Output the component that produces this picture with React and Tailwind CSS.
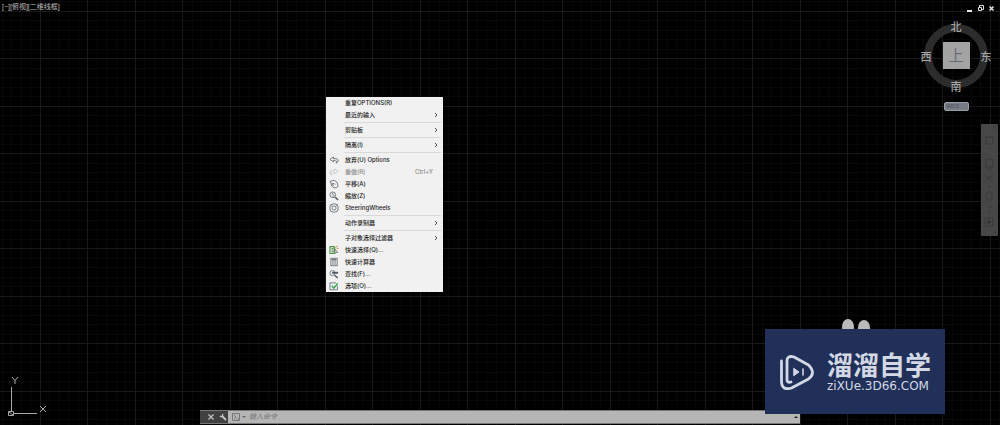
import { useState } from 'react';

const MINOR = [9, 19, 28, 38, 57, 66, 76, 85];
const MAJOR = [0, 47];

const MENU = [
  [
    { label: '重复OPTIONS(R)' },
    { label: '最近的输入', sub: true },
  ],
  [{ label: '剪贴板', sub: true }],
  [{ label: '隔离(I)', sub: true }],
  [
    { label: '放弃(U) Options', icon: 'undo' },
    { label: '重做(R)', icon: 'redo', hint: 'Ctrl+Y', disabled: true },
    { label: '平移(A)', icon: 'pan' },
    { label: '缩放(Z)', icon: 'zoom' },
    { label: 'SteeringWheels', icon: 'wheel' },
  ],
  [{ label: '动作录制器', sub: true }],
  [
    { label: '子对象选择过滤器', sub: true },
    { label: '快速选择(Q)...', icon: 'select' },
    { label: '快速计算器', icon: 'calc' },
    { label: '查找(F)...', icon: 'find' },
    { label: '选项(O)...', icon: 'options' },
  ],
];

const ICONS = {
  undo: <path d="M7 3 1.500 7 7 11V8.500h3.500q2 0 1 4.500 4-2 3-5-1-2.500-4-2.500H7z" />,
  redo: <path d="M9 3l5.500 4L9 11V8.500H5.500q-2 0-1 4.500-4-2-3-5 1-2.500 4-2.500H9z" />,
  pan: <path d="M1.500 4.500 5 2.500h4l3 2 2 3.500v4l-2.500 2H8L5 11.500 3 9.500l1.500-1L8 10.500M1.500 4.500 4 8l4-1 2 2" />,
  zoom: (
    <>
      <circle cx="6" cy="6" r="4.500" />
      <path d="M6 3v3l2.500 1M6 8.500l3 3" />
      <path d="m10 10 4.500 4.500" strokeWidth="2.400" />
    </>
  ),
  wheel: (
    <>
      <rect x="1.500" y="1.500" width="13" height="13" rx="5" />
      <rect x="5" y="5" width="6" height="6" rx="2" />
      <path d="m3 3 2.500 2.500M13 3l-2.500 2.500" strokeWidth=".8" />
    </>
  ),
  select: (
    <>
      <path d="M1.500 2.500h7v11h-7zM4 5.500h3M4 8h3M4 10.500h3" stroke="#4d9648" strokeWidth="1.800" />
      <path d="M9.500 6v8l2-2h2.500z" stroke="#666" />
      <path d="m10 4 4-2.500M12.500 5.500h2.500" stroke="#c38b3c" strokeWidth="1.600" />
    </>
  ),
  calc: (
    <>
      <rect x="3" y="2" width="10" height="12" />
      <path d="M4.500 4.500h7" strokeWidth="2" />
      <path d="M5 7.500h6M5 9.500h6M5 11.500h6" strokeDasharray="1.500 .7" />
    </>
  ),
  find: (
    <>
      <circle cx="5.500" cy="6.500" r="4" />
      <path d="m9 10 5 4.500" strokeWidth="2.400" />
      <path d="M5 6h9.500" strokeWidth="3" />
    </>
  ),
  options: (
    <>
      <path d="M13.500 8v6h-12V3h10" />
      <path d="m4.500 7.500 3 4L14 4" stroke="#2fa34c" strokeWidth="2.200" />
    </>
  ),
};

function MenuIcon({ name }) {
  return (
    <svg className="w-2.5 h-2.5" viewBox="0 0 16 16" fill="none" stroke="#4f5861" strokeWidth="1.200">
      {ICONS[name]}
    </svg>
  );
}

function Grid() {
  return (
    <svg className="absolute inset-0 w-full h-full" aria-hidden="true" shapeRendering="crispEdges">
      <defs>
        <pattern id="grid" x="40" y="11" width="95" height="95" patternUnits="userSpaceOnUse">
          {MINOR.map(n => (
            <path key={n} d={`M${n} 0h1v95h-1zM0 ${n}h95v1h-95z`} fill="#08080a" />
          ))}
          {MAJOR.map(n => (
            <path key={n} d={`M${n} 0h1v95h-1zM0 ${n}h95v1h-95z`} fill="#18191c" />
          ))}
        </pattern>
      </defs>
      <rect width="100%" height="100%" fill="url(#grid)" />
    </svg>
  );
}

function ContextMenu() {
  return (
    <div role="menu" className="absolute left-[326px] top-[97px] w-[117px] bg-[#f1f1f1] font-[Inter,'Noto_Sans_CJK_SC',sans-serif] text-[6px] leading-3 font-medium text-[#1c1c1c]">
      {MENU.map((group, i) => (
        <div key={i}>
          {i > 0 && <div role="separator" className="h-px my-px ml-[18px] mr-0.5 bg-[#d9d9d9]" />}
          {group.map(item => (
            <button
              key={item.label}
              role="menuitem"
              disabled={item.disabled}
              className="flex items-center w-full h-3 pl-[3px] pr-1 text-left whitespace-nowrap hover:bg-sky-100 disabled:text-[#8a8a8a] disabled:hover:bg-transparent"
            >
              <span className={`w-4 shrink-0 ${item.disabled ? 'opacity-30' : ''}`}>
                {item.icon && <MenuIcon name={item.icon} />}
              </span>
              <span className="flex-1">{item.label}</span>
              {item.hint && <span className="pr-[6px]">{item.hint}</span>}
              {item.sub && (
                <svg className="w-1.5 h-1.5" viewBox="0 0 6 6" fill="none" stroke="#555">
                  <path d="m2 1 2 2-2 2" />
                </svg>
              )}
            </button>
          ))}
        </div>
      ))}
    </div>
  );
}

function ViewCube() {
  return (
    <svg className="w-[76px] h-[76px]" viewBox="0 0 76 76" role="img" aria-label="ViewCube">
      <circle cx="38" cy="38" r="28" fill="none" stroke="#2c2c2c" strokeWidth="8" />
      <rect x="25" y="24" width="27" height="27" fill="#a3a3a3" />
      <text x="38" y="43" fontSize="15" textAnchor="middle" fill="#666c76">上</text>
      <g fontSize="11" fontWeight="500" textAnchor="middle" fill="#a5a5a5">
        <text x="38" y="13">北</text>
        <text x="8" y="43">西</text>
        <text x="68" y="43">东</text>
        <text x="38" y="73">南</text>
      </g>
    </svg>
  );
}

function NavBar() {
  return (
    <svg className="w-[17px] h-28" viewBox="0 0 17 112" fill="none" stroke="#383838">
      <rect width="17" height="112" rx="1" fill="#474747" stroke="none" />
      <path d="m12 2 3 3m0-3-3 3M5 13h7v7H5zM8 24h2M5 35h7v8H5zM6 45h5M4 51l8 6m0-6-8 6M7 62h3M5 70l3-3 3 3v6H6zM7 83h4M8 87v4M4 94h8v8H4zM13 108h2" />
      <path d="m7 96 3 2-3 2z" fill="#303030" />
    </svg>
  );
}

function WindowButtons() {
  return (
    <div className="flex items-center gap-1 pr-[5px]">
      <button aria-label="最小化">
        <svg className="w-[7px] h-[7px]" viewBox="0 0 7 7"><path d="M1 5h5v2H1z" fill="#e5e5e5" /></svg>
      </button>
      <button aria-label="还原">
        <svg className="w-[7px] h-[7px]" viewBox="0 0 7 7" fill="none" stroke="#e0e0e0"><path d="M1.500 2.500h3v3h-3zM2.500 2.500v-2h4v4h-2" /></svg>
      </button>
      <button aria-label="关闭">
        <svg className="w-[7px] h-[7px]" viewBox="0 0 7 7" stroke="#e5e5e5" strokeWidth="1.500"><path d="m1.500 1.500 4 4m0-4-4 4" /></svg>
      </button>
    </div>
  );
}

function UcsIcon() {
  return (
    <svg className="w-12 h-[52px] -mb-3" viewBox="0 0 48 52" fill="none" stroke="#a9a9a9">
      <path d="M11.500 43V18M14 44.500h23" />
      <path d="M8.500 42.500h5v4h-5zM9 43l4 3" />
      <path d="m12 8 3 3.500L18 8m-3 3.500V15M40 37l6 6m0-6-6 6" />
    </svg>
  );
}

function CommandLine() {
  const [command, setCommand] = useState('');
  return (
    <div className="flex items-center w-3/5 h-3.5 mx-auto bg-[#b5b5b5] border-y border-[#777]">
      <div className="flex items-center justify-end gap-1 w-7 h-full pr-px bg-[#414141]">
        <button aria-label="关闭命令行">
          <svg className="w-2 h-2" viewBox="0 0 8 8" stroke="#c4c4c4" strokeWidth="1.200"><path d="m1.500 1.500 5 5m0-5-5 5" /></svg>
        </button>
        <button aria-label="自定义">
          <svg className="w-2 h-2" viewBox="0 0 8 8" stroke="#c4c4c4" fill="none"><path d="m3 3 4 4" strokeWidth="1.800" /><path d="M1 3q2 2 3-2M1 3l1.500 1" strokeWidth="1.200" /></svg>
        </button>
      </div>
      <button aria-label="最近使用的命令" className="pl-1">
        <svg className="w-3.5 h-2" viewBox="0 0 14 8" fill="none" stroke="#777">
          <path d="M.5.5h7v7h-7zM2 2l2 2-2 2M4.500 6H7" />
          <path d="M10 3h4l-2 2z" fill="#666" stroke="none" />
        </svg>
      </button>
      <input
        aria-label="命令"
        value={command}
        onChange={e => setCommand(e.target.value)}
        placeholder="键入命令"
        className="flex-1 min-w-0 pl-[3px] bg-transparent text-[7px] leading-3 italic text-[#333] placeholder-[#777] outline-none"
      />
      <button aria-label="展开历史记录" className="pr-px">
        <svg className="w-1.5 h-1.5" viewBox="0 0 6 6"><path d="M1 4h4L3 2z" fill="#222" /></svg>
      </button>
    </div>
  );
}

function Watermark() {
  return (
    <div className="absolute right-[55px] bottom-[11px]">
      <svg className="w-8 h-2.5 ml-[76px]" viewBox="0 0 32 10" fill="#bababa">
        <ellipse cx="7" cy="8" rx="6" ry="8" />
        <ellipse cx="23" cy="9" rx="6" ry="8" />
      </svg>
      <div className="flex items-center gap-3 w-[180px] h-[85px] pl-[14px] bg-[#213058] text-[#d3d8e5]">
        <svg className="w-9 h-9" viewBox="0 0 36 36" fill="none" stroke="currentColor" strokeLinecap="round" strokeLinejoin="round">
          <path d="M2.500 7v20q0 10 10 7l17-9q8-6 0-14L15 3Q8 1 8 7v19q0 3 4 2" strokeWidth="2.800" />
          <path d="m15 14.500 5 3.500-5 3.500z" fill="currentColor" strokeWidth="1" />
          <path d="M24 15v6" strokeWidth="1.600" />
        </svg>
        <div className="pb-1">
          <p className="font-['Noto_Sans_CJK_SC',sans-serif] text-[26px] leading-8 font-bold">溜溜自学</p>
          <p className="font-['DejaVu_Sans',sans-serif] text-[12px] leading-3">ziXUe.3D66.COM</p>
        </div>
      </div>
    </div>
  );
}

export default function App() {
  return (
    <div className="relative flex flex-col min-h-screen overflow-hidden bg-black font-['Open_Sans','Noto_Sans_CJK_SC',sans-serif]">
      <Grid />
      <header className="relative flex justify-between h-4">
        <p className="pl-0.5 pt-px font-['Liberation_Sans','Noto_Sans_CJK_SC',sans-serif] text-[7px] leading-3 text-[#bdbdbd]">[−][俯视][二维线框]</p>
        <WindowButtons />
      </header>

      <main className="relative flex flex-1 items-end justify-between">
        <UcsIcon />
        <aside className="flex flex-col items-end self-start pr-0.5">
          <div className="flex flex-col items-center pt-0.5 pr-1">
            <ViewCube />
            <button className="w-[25px] h-[9px] mt-2 pl-0.5 rounded-[2px] bg-[#777b86] border border-[#999da6] text-left text-[6px] leading-[7px] text-[#444955]">WCS</button>
          </div>
          <div className="pt-[13px]">
            <NavBar />
          </div>
        </aside>
      </main>

      <footer className="relative pt-px pb-px">
        <CommandLine />
      </footer>

      <ContextMenu />
      <Watermark />
    </div>
  );
}
